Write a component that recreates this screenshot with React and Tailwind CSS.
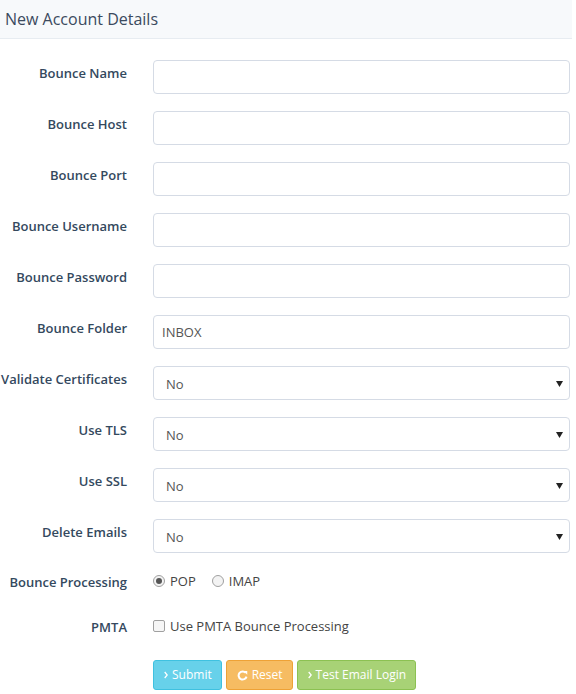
import { useState } from 'react';

const textFields = [
  { label: 'Bounce Name', value: '' },
  { label: 'Bounce Host', value: '' },
  { label: 'Bounce Port', value: '' },
  { label: 'Bounce Username', value: '' },
  { label: 'Bounce Password', value: '', type: 'password' },
  { label: 'Bounce Folder', value: 'INBOX' },
];

const selectFields = ['Validate Certificates', 'Use TLS', 'Use SSL', 'Delete Emails'];

function Row({ label, children, className = '' }) {
  return (
    <div className={`flex ${className}`}>
      <label className="w-[127px] shrink-0 pt-[3px] text-right text-[13px] font-semibold leading-[20px] text-[#34495e]">
        {label}
      </label>
      <div className="ml-[26px] flex-1">{children}</div>
    </div>
  );
}

function Chevron() {
  return (
    <svg width="4" height="8" viewBox="0 0 4 8" className="mr-[4px]">
      <path d="M0.7 1 L3.2 4 L0.7 7" fill="none" stroke="currentColor" strokeWidth="1.3" />
    </svg>
  );
}

export default function App() {
  const [mode, setMode] = useState('pop');
  const [pmta, setPmta] = useState(false);

  return (
    <div className="w-[576px] h-[694px] bg-white font-['Open_Sans',sans-serif] text-[#34495e]">
      <div className="w-[572px] h-[39px] bg-[#f7f9fb] border-b border-[#e7ecf1] px-[5px] pt-[8px]">
        <h1 className="text-[16px] leading-[22px] text-[#3b4a5e]">New Account Details</h1>
      </div>

      <div className="pt-[21px] pr-[6px]">
        {textFields.map((f) => (
          <Row key={f.label} label={f.label} className="mb-[17px]">
            <input
              type={f.type || 'text'}
              defaultValue={f.value}
              className="block w-full h-[34px] rounded-[4px] border border-[#d5dbe5] bg-white px-[8px] text-[13px] text-[#555] outline-none"
            />
          </Row>
        ))}

        {selectFields.map((label) => (
          <Row key={label} label={label} className="mb-[17px]">
            <div className="relative h-[34px] rounded-[4px] border border-[#d5dbe5] bg-white">
              <span className="absolute left-[12px] top-[8px] text-[13px] leading-[18px] text-[#555]">No</span>
              <svg width="7" height="6" viewBox="0 0 7 6" className="absolute right-[6px] top-[14px]">
                <path d="M0 0 H7 L3.5 6 Z" fill="#222" />
              </svg>
            </div>
          </Row>
        ))}

        <Row label="Bounce Processing" className="mt-[-1px] mb-[22px]">
          <div className="flex items-center gap-[16px] pt-[2px] text-[13px] leading-[20px] text-[#444]">
            <label className="flex items-center gap-[5px]" onClick={() => setMode('pop')}>
              <span className="flex h-[12px] w-[12px] items-center justify-center rounded-full border border-[#a0a0a0] bg-[#f3f3f3]">
                {mode === 'pop' && <span className="h-[6px] w-[6px] rounded-full bg-[#555]" />}
              </span>
              POP
            </label>
            <label className="flex items-center gap-[5px]" onClick={() => setMode('imap')}>
              <span className="flex h-[12px] w-[12px] items-center justify-center rounded-full border border-[#a0a0a0] bg-[#f3f3f3]">
                {mode === 'imap' && <span className="h-[6px] w-[6px] rounded-full bg-[#555]" />}
              </span>
              IMAP
            </label>
          </div>
        </Row>

        <Row label="PMTA" className="mb-[23px]">
          <label className="flex items-center gap-[5px] pt-[2px] text-[13px] leading-[20px] text-[#444]" onClick={() => setPmta(!pmta)}>
            <span className="h-[12px] w-[12px] rounded-[2px] border border-[#a0a0a0] bg-[#f6f6f6] text-[9px] leading-[10px] text-center">
              {pmta ? '✓' : ''}
            </span>
            Use PMTA Bounce Processing
          </label>
        </Row>

        <div className="ml-[153px] flex gap-[4px]">
          <button className="flex h-[30px] items-center rounded-[3px] border border-[#3fc1e0] bg-[#67d1ea] pl-[10px] pr-[9px] text-[12px] text-white">
            <Chevron />Submit
          </button>
          <button className="flex h-[30px] items-center rounded-[3px] border border-[#eea236] bg-[#f6bc62] pl-[10px] pr-[9px] text-[12px] text-white">
            <svg width="11" height="11" viewBox="0 0 12 12" className="mr-[4px]">
              <path d="M9.6 3.2 A4.4 4.4 0 1 0 10.4 7.2" fill="none" stroke="white" strokeWidth="2.2" />
              <path d="M7.2 1.2 L11.2 1.2 L11.2 5.2 Z" fill="white" />
            </svg>
            Reset
          </button>
          <button className="flex h-[30px] items-center rounded-[3px] border border-[#8cc152] bg-[#a8d276] pl-[10px] pr-[9px] text-[12px] text-white">
            <Chevron />Test Email Login
          </button>
        </div>
      </div>
    </div>
  );
}
